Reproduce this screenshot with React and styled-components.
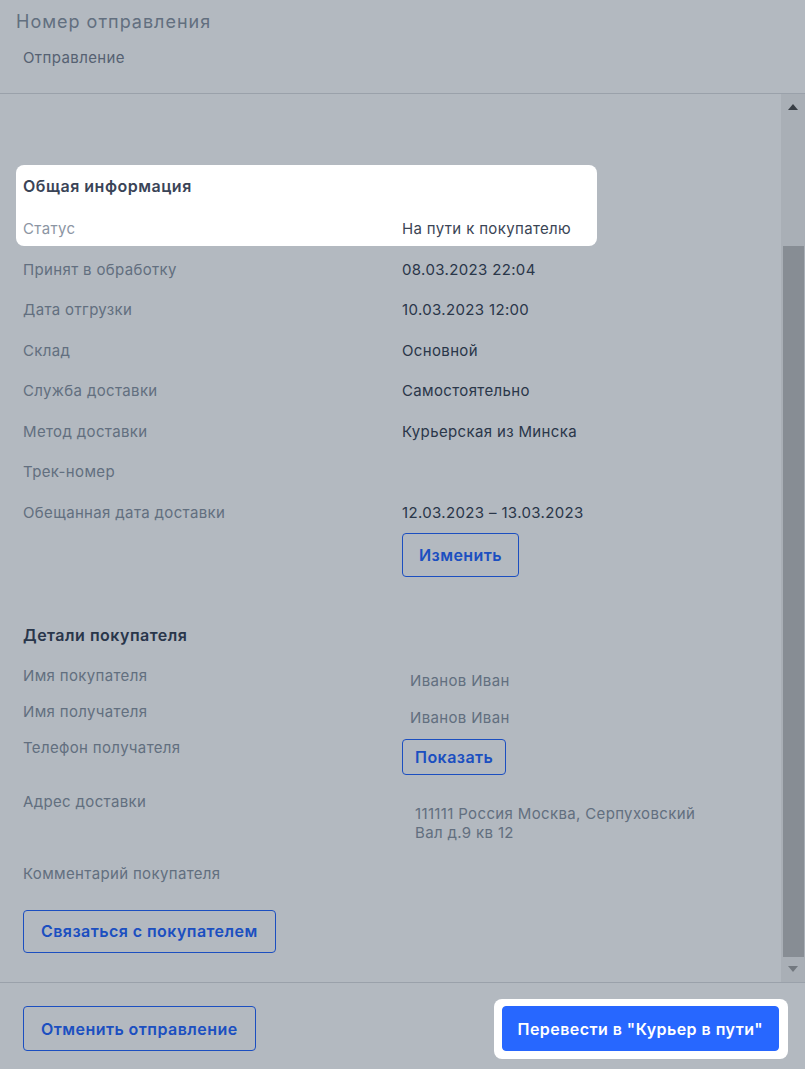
import React from 'react'
import styled, { createGlobalStyle } from 'styled-components'

const colors = {
  blue: '#2767ff',
  label: '#8c95a3',
  text: '#3b4555',
  title: '#3a4457',
  line: '#dbdde0',
  shade: 'rgba(2, 22, 48, 0.3)',
}

const GlobalStyle = createGlobalStyle`
  * { box-sizing: border-box; }
  html, body { margin: 0; padding: 0; background: #fff; }
  body { font-family: Inter, "Noto Sans", "Liberation Sans", sans-serif; }
`

const Page = styled.div`
  position: relative;
  height: 100vh;
  display: flex;
  flex-direction: column;
  background: #fff;
  overflow: hidden;
`

const Shade = styled.div`
  position: absolute;
  inset: 0;
  background: ${colors.shade};
  z-index: 1;
  pointer-events: none;
`

const Header = styled.header`
  height: 94px;
  padding: 10px 16px 0;
  border-bottom: 1px solid ${colors.line};
  flex-shrink: 0;
`

const Title = styled.h1`
  margin: 0;
  font-size: 18px;
  line-height: 24px;
  font-weight: 400;
  letter-spacing: 1px;
  color: ${colors.label};
`

const Subtitle = styled.div`
  margin: 14px 0 0 7px;
  font-size: 15px;
  line-height: 20px;
  letter-spacing: 0.4px;
  color: #7a8290;
`

const Body = styled.div`
  flex: 1;
  min-height: 0;
  display: flex;
`

const Content = styled.div`
  flex: 1;
  padding: 71px 0 0 16px;
  overflow: hidden;
`

const Section = styled.section`
  width: 581px;
  padding: 0 7px;
  margin-top: ${p => p.$top || 0}px;
  ${p => p.$spot && `
    position: relative;
    z-index: 2;
    background: #fff;
    border-radius: 8px;
  `}
`

const SectionTitle = styled.h2`
  margin: 0;
  padding: 11px 0 9px;
  font-size: 16px;
  line-height: 20px;
  font-weight: 600;
  letter-spacing: 0.5px;
  color: ${colors.title};
`

const Row = styled.div`
  display: grid;
  grid-template-columns: 379px 1fr;
  padding: 14px 0 6.5px;
  font-size: 15px;
  line-height: 20px;
  letter-spacing: 0.35px;
`

const Label = styled.div`
  color: ${colors.label};
`

const Value = styled.div`
  color: ${colors.text};
`

const Rows = styled.div`
  padding-top: 12px;
`

const DetailRow = styled.div`
  display: grid;
  grid-template-columns: 379px 1fr;
  align-items: start;
  min-height: ${p => p.$h}px;
  font-size: 15px;
  line-height: 20px;
  letter-spacing: 0.35px;
`

const PlainValue = styled.div`
  color: ${colors.label};
  padding: ${p => p.$pad || '5px 0 0 8px'};
  line-height: ${p => p.$lh || 20}px;
  white-space: nowrap;
`

const Button = styled.button`
  display: inline-flex;
  align-items: center;
  justify-content: center;
  height: ${p => p.$h || 44}px;
  padding: 0 ${p => p.$px || 17}px;
  margin-top: ${p => p.$mt || 0}px;
  border: 1px solid ${colors.blue};
  border-radius: 4px;
  background: ${p => (p.$primary ? colors.blue : 'transparent')};
  color: ${p => (p.$primary ? '#fff' : colors.blue)};
  font-family: inherit;
  font-size: 16px;
  font-weight: 600;
  letter-spacing: 0.45px;
  white-space: nowrap;
  cursor: pointer;
`

const Scrollbar = styled.div`
  width: 24px;
  flex-shrink: 0;
  display: flex;
  flex-direction: column;
  background: #f1f1f1;
`

const ArrowBox = styled.div`
  height: 26px;
  display: flex;
  align-items: center;
  justify-content: center;
  flex-shrink: 0;
  &::after {
    content: '';
    border-left: 5.5px solid transparent;
    border-right: 5.5px solid transparent;
    ${p => (p.$down
      ? 'border-top: 6px solid #a3a3a3;'
      : 'border-bottom: 6px solid #505050;')}
  }
`

const Thumb = styled.div`
  margin: auto 1px -1px 2px;
  height: 711px;
  background: #c1c1c1;
`

const Footer = styled.footer`
  flex-shrink: 0;
  display: flex;
  justify-content: space-between;
  align-items: center;
  padding: 23px 26px 18px 23px;
  border-top: 1px solid ${colors.line};
`

const Spot = styled.div`
  position: relative;
  z-index: 2;
  background: #fff;
  border-radius: 8px;
  padding: 7px 9px 8px 8px;
  margin: -7px -9px -8px -8px;
  display: flex;
`

const info = [
  ['Принят в обработку', '08.03.2023 22:04'],
  ['Дата отгрузки', '10.03.2023 12:00'],
  ['Склад', 'Основной'],
  ['Служба доставки', 'Самостоятельно'],
  ['Метод доставки', 'Курьерская из Минска'],
  ['Трек-номер', ''],
]

export default function App() {
  return (
    <>
      <GlobalStyle />
      <Page>
        <Header>
          <Title>Номер отправления</Title>
          <Subtitle>Отправление</Subtitle>
        </Header>

        <Body>
          <Content>
            <Section $spot>
              <SectionTitle>Общая информация</SectionTitle>
              <Row>
                <Label>Статус</Label>
                <Value>На пути к покупателю</Value>
              </Row>
            </Section>

            <Section>
              {info.map(([label, value]) => (
                <Row key={label}>
                  <Label>{label}</Label>
                  <Value>{value}</Value>
                </Row>
              ))}
              <Row>
                <Label>Обещанная дата доставки</Label>
                <Value>
                  <div>12.03.2023 – 13.03.2023</div>
                  <Button $h={44} $px={16} $mt={10}>Изменить</Button>
                </Value>
              </Row>
            </Section>

            <Section $top={30.5}>
              <SectionTitle>Детали покупателя</SectionTitle>
              <Rows>
                <DetailRow $h={36}>
                  <Label>Имя покупателя</Label>
                  <PlainValue>Иванов Иван</PlainValue>
                </DetailRow>
                <DetailRow $h={36}>
                  <Label>Имя получателя</Label>
                  <PlainValue $pad="6px 0 0 8px">Иванов Иван</PlainValue>
                </DetailRow>
                <DetailRow $h={54}>
                  <Label>Телефон получателя</Label>
                  <div>
                    <Button $h={36} $px={12} $mt={1}>Показать</Button>
                  </div>
                </DetailRow>
                <DetailRow $h={72}>
                  <Label>Адрес доставки</Label>
                  <PlainValue $pad="12px 0 0 13px" $lh={19}>
                    111111 Россия Москва, Серпуховский<br />Вал д.9 кв 12
                  </PlainValue>
                </DetailRow>
                <DetailRow $h={20}>
                  <Label>Комментарий покупателя</Label>
                </DetailRow>
              </Rows>
              <Button $h={43} $px={17} $mt={26}>Связаться с покупателем</Button>
            </Section>
          </Content>

          <Scrollbar>
            <ArrowBox />
            <Thumb />
            <ArrowBox $down />
          </Scrollbar>
        </Body>

        <Footer>
          <Button $h={45} $px={17}>Отменить отправление</Button>
          <Spot>
            <Button $primary $h={45} $px={15}>Перевести в "Курьер в пути"</Button>
          </Spot>
        </Footer>

        <Shade />
      </Page>
    </>
  )
}
